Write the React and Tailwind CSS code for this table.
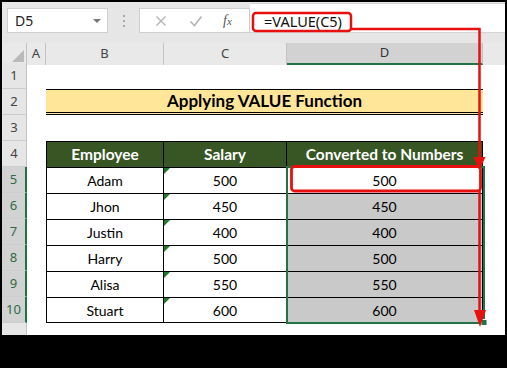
import React from 'react';

// Cell font (Calibri stand-in) and Excel UI font
const cellFont = { fontFamily: 'Lato, "Liberation Sans", sans-serif' };
const uiFont = { fontFamily: '"Noto Sans", "Open Sans", sans-serif' };

const cols = 'grid grid-cols-[25px_19px_118px_123px_196px_22px]';

const data = [
  ['Adam', 500],
  ['Jhon', 450],
  ['Justin', 400],
  ['Harry', 500],
  ['Alisa', 550],
  ['Stuart', 600],
];

function RowHead({ n, sel }) {
  return (
    <div
      className={`flex items-center justify-center text-[13px] border-b border-[#cdcdcd] ${
        sel
          ? 'bg-[#d2d2d2] text-[#2e6b45] border-r-2 border-r-[#217346]'
          : 'bg-[#e6e6e6] text-[#444] border-r border-r-[#c3c3c3]'
      }`}
      style={uiFont}
    >
      {n}
    </div>
  );
}

function ColHead({ label, sel }) {
  return (
    <div
      className={`flex items-center justify-center text-[13px] border-r border-[#c3c3c3] ${
        sel ? 'bg-[#d2d2d2] border-b-2 border-b-[#217346] text-[#333]' : 'bg-[#e9e9e9] text-[#444]'
      }`}
      style={uiFont}
    >
      {label}
    </div>
  );
}

export default function App() {
  return (
    <div className="relative w-[507px] h-[368px] bg-black pt-[2px] pl-[2px]">
      <div className="w-[503px] h-[333px] bg-white flex flex-col overflow-hidden">
        {/* Formula bar */}
        <div className="h-[41px] bg-[#e6e6e6] flex items-start shrink-0">
          <div className="ml-[5px] mt-[6px] w-[101px] h-[25px] bg-white border border-[#cfcfcf] flex items-center justify-between pl-[7px] pr-[6px]">
            <span className="text-[14px] text-[#222]" style={uiFont}>D5</span>
            <span className="w-0 h-0 border-l-[4px] border-r-[4px] border-t-[4px] border-l-transparent border-r-transparent border-t-[#777]" />
          </div>
          <div className="w-[31px] mt-[13px] flex flex-col items-center gap-[3px]">
            <span className="w-[2px] h-[2px] bg-[#a8a8a8]" />
            <span className="w-[2px] h-[2px] bg-[#a8a8a8]" />
            <span className="w-[2px] h-[2px] bg-[#a8a8a8]" />
          </div>
          <div className="mt-[6px] w-[111px] h-[25px] bg-white border border-[#cfcfcf] flex items-center">
            <svg width="12" height="12" viewBox="0 0 12 12" className="ml-[15px]">
              <path d="M1.5 1.5l9 9M10.5 1.5l-9 9" stroke="#b4b4b4" strokeWidth="1.4" />
            </svg>
            <svg width="14" height="12" viewBox="0 0 14 12" className="ml-[22px]">
              <path d="M1.5 6.5l4 4 7-9" stroke="#b4b4b4" strokeWidth="1.6" fill="none" />
            </svg>
            <span className="ml-[20px] text-[14px] italic text-[#555]" style={{ fontFamily: '"Liberation Serif", serif' }}>
              f<span className="text-[11px]">x</span>
            </span>
          </div>
          <div className="mt-[1px] flex-1 h-[30px] bg-white border-t border-b border-[#d4d4d4] flex items-center pl-[14px]">
            <span className="text-[14.5px] text-[#111] mt-[7px]" style={uiFont}>=VALUE(C5)</span>
          </div>
        </div>

        {/* Column headers */}
        <div className={`${cols} h-[20px] shrink-0`}>
          <div className="bg-[#e9e9e9] border-r border-[#c3c3c3] flex items-end justify-end pr-[2px] pb-[3px]">
            <svg width="12" height="12" viewBox="0 0 12 12">
              <path d="M12 0V12H0Z" fill="#b9b9b9" />
            </svg>
          </div>
          <ColHead label="A" />
          <ColHead label="B" />
          <ColHead label="C" />
          <ColHead label="D" sel />
          <div className="bg-[#e9e9e9]" />
        </div>

        {/* Sheet body */}
        <div className={`${cols} grid-rows-[repeat(10,26px)_12px]`} style={cellFont}>
          <RowHead n={1} />
          <div className="col-span-5" />

          <RowHead n={2} />
          <div />
          <div className="col-span-3 bg-[#ffe699] border-t border-black border-b-[3px] border-b-black [border-bottom-style:double] flex items-center justify-center text-[17px] font-bold text-black">
            Applying VALUE Function
          </div>
          <div />

          <RowHead n={3} />
          <div className="col-span-5" />

          <RowHead n={4} />
          <div />
          {['Employee', 'Salary', 'Converted to Numbers'].map((h, i) => (
            <div
              key={h}
              className={`bg-[#375623] text-white font-bold text-[15.5px] flex items-center justify-center border-t border-r border-black ${
                i === 0 ? 'border-l' : ''
              }`}
            >
              {h}
            </div>
          ))}
          <div />

          {data.map(([name, sal], i) => {
            const last = i === data.length - 1;
            const rowBorder = `border-t border-r border-black ${last ? 'border-b' : ''}`;
            return (
              <React.Fragment key={i}>
                <RowHead n={i + 5} sel />
                <div />
                <div className={`${rowBorder} border-l flex items-center justify-center text-[14px] text-black`}>
                  {name}
                </div>
                <div className={`${rowBorder} relative flex items-center justify-center text-[14px] text-black`}>
                  <span className="absolute top-0 left-0 w-0 h-0 border-t-[6px] border-r-[6px] border-t-[#1f7a2c] border-r-transparent" />
                  {sal}
                </div>
                <div
                  className={`${rowBorder} flex items-center justify-center text-[14px] text-black ${
                    i === 0 ? 'bg-white' : 'bg-[#c9c9c9]'
                  }`}
                >
                  {sal}
                </div>
                <div />
              </React.Fragment>
            );
          })}

          <div className="bg-[#e6e6e6] border-r border-[#c3c3c3]" />
          <div className="col-span-5" />
        </div>
      </div>

      {/* Selection and red callout overlay */}
      <svg className="absolute top-0 left-0 pointer-events-none" width="507" height="368" viewBox="0 0 507 368">
        <rect x="287" y="167" width="197" height="156" fill="none" stroke="#217346" strokeWidth="2" />
        <rect x="481" y="319.5" width="6" height="6" fill="#217346" stroke="#fff" strokeWidth="1" />
        <rect x="253" y="13" width="98" height="18" rx="3" fill="none" stroke="#e8100f" strokeWidth="2.5" />
        <path d="M351 29H479.5V158" fill="none" stroke="#e8100f" strokeWidth="2.5" />
        <path d="M473.5 157H485.5L479.5 170Z" fill="#e8100f" />
        <rect x="291.5" y="166.5" width="189" height="24.5" rx="3" fill="none" stroke="#e8100f" strokeWidth="2.8" />
        <path d="M479.5 191V312" fill="none" stroke="#e8100f" strokeWidth="2.5" />
        <path d="M474 310H486L480 327Z" fill="#e8100f" />
      </svg>
    </div>
  );
}
